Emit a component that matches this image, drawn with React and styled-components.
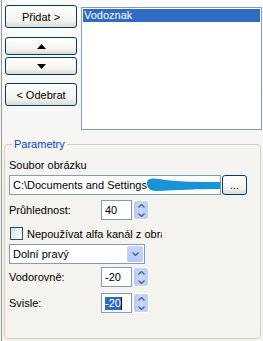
import React from "react";
import styled, { createGlobalStyle } from "styled-components";

const GlobalStyle = createGlobalStyle`
  html, body {
    margin: 0;
    padding: 0;
  }
  body {
    width: 263px;
    height: 341px;
    overflow: hidden;
    background: #f4f3ee;
    font-family: "Liberation Sans", Arial, sans-serif;
    font-size: 11px;
    color: #000;
  }
`;

const Page = styled.div`
  box-sizing: border-box;
  height: 341px;
  margin-left: 1px;
  border-left: 1px solid #919b9c;
  background: linear-gradient(#fcfcfe, #f4f3ee 55%);
  display: flex;
  flex-direction: column;
`;

const TopRow = styled.div`
  display: flex;
  align-items: flex-start;
  gap: 4px;
  padding: 5px 1px 0 3px;
`;

const ButtonColumn = styled.div`
  display: flex;
  flex-direction: column;
  width: 72px;
`;

const XpButton = styled.button`
  box-sizing: border-box;
  width: ${(p) => p.$w || "100%"};
  height: ${(p) => p.$h || 23}px;
  margin: ${(p) => p.$mt || 0}px 0 0 ${(p) => p.$ml || 0}px;
  padding: 0;
  border: 1px solid #003c74;
  border-radius: 3px;
  background: linear-gradient(#ffffff, #f4f3ee 70%, #dedbcd);
  font-family: "Liberation Sans", Arial, sans-serif;
  font-size: 11px;
  color: #000;
  display: flex;
  align-items: center;
  justify-content: center;
  flex: none;
`;

const ListBox = styled.div`
  box-sizing: border-box;
  flex: 1;
  height: 123px;
  margin-top: 2px;
  padding: 1px;
  border: 1px solid #7f9db9;
  background: #fff;
`;

const ListItem = styled.div`
  height: 13px;
  line-height: 13px;
  padding-left: 1px;
  background: ${(p) => (p.$selected ? "#316ac5" : "transparent")};
  color: ${(p) => (p.$selected ? "#fff" : "#000")};
`;

const Group = styled.fieldset`
  flex: 1;
  margin: 8px 2px 2px 2px;
  padding: 8px 4px 0 4px;
  border: 1px solid #d0d0bf;
  border-radius: 4px;
  min-width: 0;
  display: flex;
  flex-direction: column;
`;

const Legend = styled.legend`
  margin-left: 3px;
  padding: 0 2px;
  line-height: 13px;
  color: #0046d5;
`;

const Label = styled.div`
  line-height: 13px;
  white-space: nowrap;
`;

const Row = styled.div`
  display: flex;
  align-items: center;
  margin-top: ${(p) => p.$mt || 0}px;
  height: 20px;
`;

const RowLabel = styled.div`
  width: 92px;
  line-height: 13px;
  flex: none;
`;

const TextField = styled.div`
  box-sizing: border-box;
  width: ${(p) => p.$w}px;
  height: 20px;
  border: 1px solid #7f9db9;
  background: #fff;
  padding-left: 3px;
  white-space: nowrap;
  overflow: hidden;
  flex: none;
  display: flex;
  align-items: center;
`;

const Selected = styled.span`
  background: #316ac5;
  color: #fff;
  line-height: 13px;
`;

const Caret = styled.span`
  display: inline-block;
  width: 1px;
  height: 13px;
  background: #000;
`;

const Scribble = styled.svg`
  flex: none;
  margin-left: -1px;
`;

const Spinner = styled.div`
  box-sizing: border-box;
  width: 16px;
  height: 20px;
  margin-left: 1px;
  border: 1px solid #fff;
  border-radius: 3px;
  background: linear-gradient(90deg, #b7c9f7, #c9d7fc 50%, #b9cbf8);
  display: flex;
  flex-direction: column;
  align-items: center;
  justify-content: space-around;
  flex: none;
`;

const CheckRow = styled.div`
  display: flex;
  align-items: center;
  gap: 4px;
  margin-top: 7px;
  height: 13px;
  padding-left: 1px;
  width: 152px;
  overflow: hidden;
  white-space: nowrap;
`;

const CheckBox = styled.span`
  box-sizing: border-box;
  width: 13px;
  height: 13px;
  border: 1px solid #1c5180;
  background: linear-gradient(135deg, #dcdcd7, #ffffff);
  flex: none;
`;

const Combo = styled.div`
  box-sizing: border-box;
  width: 136px;
  height: 20px;
  margin-top: 4px;
  border: 1px solid #7f9db9;
  background: #fff;
  display: flex;
  align-items: center;
  padding: 1px 1px 1px 3px;
`;

const ComboText = styled.span`
  flex: 1;
  line-height: 13px;
`;

const ComboButton = styled.span`
  box-sizing: border-box;
  width: 16px;
  height: 100%;
  border-radius: 2px;
  background: linear-gradient(#c8d6fc, #b5c8f6);
  display: flex;
  align-items: center;
  justify-content: center;
`;

const Chevron = ({ up }) => (
  <svg width="7" height="4" viewBox="0 0 7 4">
    <path
      d={up ? "M0.5 3.5 L3.5 0.5 L6.5 3.5" : "M0.5 0.5 L3.5 3.5 L6.5 0.5"}
      fill="none"
      stroke="#4d6185"
      strokeWidth="1.4"
    />
  </svg>
);

const Triangle = ({ up }) => (
  <svg width="9" height="5" viewBox="0 0 9 5">
    <path d={up ? "M0 5 L4.5 0 L9 5 Z" : "M0 0 L4.5 5 L9 0 Z"} fill="#000" />
  </svg>
);

const SpinField = ({ label, value, selected, mt }) => (
  <Row $mt={mt}>
    <RowLabel>{label}</RowLabel>
    <TextField $w={31}>
      {selected ? (
        <>
          <Selected>{value}</Selected>
          <Caret />
        </>
      ) : (
        value
      )}
    </TextField>
    <Spinner>
      <Chevron up />
      <Chevron />
    </Spinner>
  </Row>
);

export default function App() {
  return (
    <>
      <GlobalStyle />
      <Page>
        <TopRow>
          <ButtonColumn>
            <XpButton>Přidat &gt;</XpButton>
            <XpButton $h={18} $mt={9}>
              <Triangle up />
            </XpButton>
            <XpButton $h={18} $mt={2}>
              <Triangle />
            </XpButton>
            <XpButton $mt={8}>&lt; Odebrat</XpButton>
          </ButtonColumn>
          <ListBox>
            <ListItem $selected>Vodoznak</ListItem>
          </ListBox>
        </TopRow>

        <Group>
          <Legend>Parametry</Legend>
          <Label>Soubor obrázku</Label>
          <Row $mt={3}>
            <TextField $w={212}>
              C:\Documents and Settings
              <Scribble width="78" height="16" viewBox="0 0 78 16">
                <path
                  d="M1 6 C1 1, 7 1, 13 2 C30 5, 55 5, 73 5 C78 5, 78 12, 73 12 C55 12, 30 13, 10 14 C3 14, 1 10, 1 6 Z"
                  fill="#1793d6"
                />
              </Scribble>
            </TextField>
            <XpButton $w="25px" $h={20} $ml={1}>
              ...
            </XpButton>
          </Row>
          <SpinField label="Průhlednost:" value="40" mt={5} />
          <CheckRow>
            <CheckBox />
            Nepoužívat alfa kanál z obrázku
          </CheckRow>
          <Combo>
            <ComboText>Dolní pravý</ComboText>
            <ComboButton>
              <Chevron />
            </ComboButton>
          </Combo>
          <SpinField label="Vodorovně:" value="-20" mt={3} />
          <SpinField label="Svisle:" value="-20" selected mt={6} />
        </Group>
      </Page>
    </>
  );
}
